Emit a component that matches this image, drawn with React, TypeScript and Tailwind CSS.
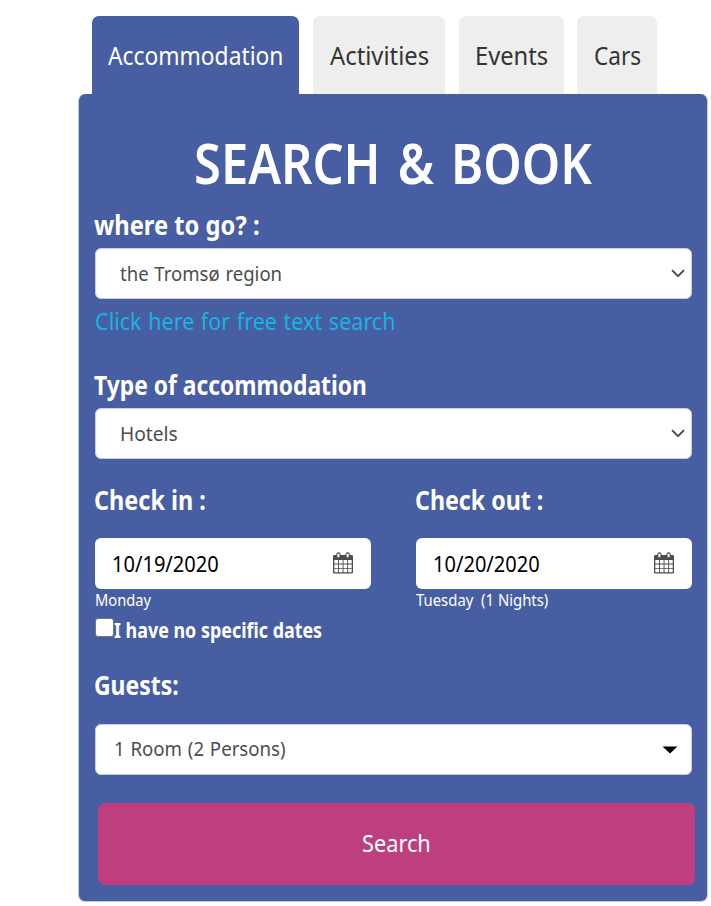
import { useLayoutEffect, useRef, useState } from "react";

type FitProps = { width: number; className?: string; children: string };

/** Single line of text condensed or widened horizontally to the given width. */
function Fit({ width, className = "", children }: FitProps) {
  const ref = useRef<HTMLSpanElement>(null);
  const [scale, setScale] = useState(1);
  useLayoutEffect(() => {
    if (ref.current) setScale(width / ref.current.offsetWidth);
  }, [width]);
  return (
    <span className={`block whitespace-pre ${className}`} style={{ width }}>
      <span ref={ref} className="inline-block origin-left" style={{ transform: `scaleX(${scale})` }}>
        {children}
      </span>
    </span>
  );
}

const label = "-ml-px h-9 text-[27px] leading-9 font-bold";
const field =
  "flex h-[51px] w-[597px] items-center rounded-md border border-[#c8cde0] bg-white text-[20.5px] text-[#4d4d4d]";

function Chevron() {
  return (
    <svg width="14" height="9" viewBox="0 0 14 9" className="mr-[6px]" fill="none" stroke="#4a4a4a" strokeWidth="1.9">
      <path d="M1 1.2 7 7.2 13 1.2" />
    </svg>
  );
}

function Calendar() {
  return (
    <svg width="20" height="22" viewBox="0 0 20 22" className="-mt-px" fill="none">
      <rect x="0" y="3" width="20" height="18.500" rx="1.200" fill="#4d4d4d" />
      <path
        d="M1.300 8h3.700v3.500H1.300zM5.900 8h3.700v3.500H5.900zM10.500 8h3.700v3.500h-3.700zM15.100 8h3.600v3.500h-3.600zM1.300 12.400h3.700v3.500H1.300zM5.900 12.400h3.700v3.500H5.900zM10.500 12.400h3.700v3.500h-3.700zM15.100 12.400h3.600v3.500h-3.600zM1.300 16.800h3.700v3.500H1.300zM5.900 16.800h3.700v3.500H5.900zM10.500 16.800h3.700v3.500h-3.700zM15.100 16.800h3.600v3.500h-3.600z"
        fill="#fff"
      />
      <rect x="3.800" y="0.900" width="3.200" height="5" rx="1.400" fill="#fff" stroke="#4d4d4d" strokeWidth="1.100" />
      <rect x="13" y="0.900" width="3.200" height="5" rx="1.400" fill="#fff" stroke="#4d4d4d" strokeWidth="1.100" />
    </svg>
  );
}

type DateFieldProps = { title: string; titleWidth: number; value: string; note: string; noteWidth: number };

function DateField({ title, titleWidth, value, note, noteWidth }: DateFieldProps) {
  return (
    <div className="w-[276px]">
      <Fit width={titleWidth} className={label}>{title}</Fit>
      <div className="mt-5 flex h-[51px] items-center justify-between rounded-md bg-white pr-[18px] pl-[17px]">
        <Fit width={107} className="text-[21px] leading-[48px] text-black">{value}</Fit>
        <Calendar />
      </div>
      <Fit width={noteWidth} className="h-6 text-[16px] leading-[23px]">{note}</Fit>
    </div>
  );
}

export default function App() {
  const tab = "flex h-[78px] justify-center rounded-t-[7px] bg-[#eeeeee] text-[25px] leading-[78px] text-[#333]";
  return (
    <main className="h-[906px] w-[711px] bg-white pt-4 pl-[78px] font-['Noto_Sans','Open_Sans',sans-serif]">
      <nav className="flex pl-[14px]">
        <div className="mr-[14px] flex h-[78px] w-[207px] justify-center rounded-t-[7px] bg-[#475ea2] text-[25px] leading-[78px] text-white">
          <Fit width={175}>Accommodation</Fit>
        </div>
        <div className={`${tab} mr-[14px] w-[132px]`}><Fit width={99}>Activities</Fit></div>
        <div className={`${tab} mr-[13px] w-[105px]`}><Fit width={73}>Events</Fit></div>
        <div className={`${tab} w-[80px]`}><Fit width={47}>Cars</Fit></div>
      </nav>

      <section className="h-[808px] w-[630px] rounded-[7px] border border-t-0 border-[#c5cce2] bg-[#475ea2] pl-4 text-white">
        <h1 className="flex h-[113px] pt-[36px] pl-[99px]">
          <Fit width={398} className="text-[56px] leading-[64px] font-semibold [word-spacing:5px]">SEARCH & BOOK</Fit>
        </h1>

        <Fit width={166} className={label}>where to go? :</Fit>
        <div className={`${field} mt-[5px] justify-between pl-6`}>
          <Fit width={162} className="leading-[47px] [word-spacing:1px]">the Tromsø region</Fit>
          <Chevron />
        </div>
        <Fit width={301} className="mt-[4px] h-9 text-[23px] leading-9 text-[#18b4e0] [word-spacing:1px]">Click here for free text search</Fit>

        <Fit width={273} className={`${label} mt-[28px]`}>Type of accommodation</Fit>
        <div className={`${field} mt-[5px] justify-between pl-6`}>
          <Fit width={58} className="leading-[47px]">Hotels</Fit>
          <Chevron />
        </div>

        <div className="mt-[23px] flex gap-[45px]">
          <DateField title="Check in :" titleWidth={112} value="10/19/2020" note="Monday" noteWidth={56} />
          <DateField title="Check out :" titleWidth={128} value="10/20/2020" note="Tuesday  (1 Nights)" noteWidth={132} />
        </div>

        <label className="flex h-[34px]">
          <span className="mt-[5px] block size-[19px] rounded-[3px] border border-[#767676] bg-white" />
          <Fit width={208} className="text-[21.5px] leading-[34px] font-bold">I have no specific dates</Fit>
        </label>

        <Fit width={85} className={`${label} mt-[20px]`}>Guests:</Fit>
        <div className={`${field} mt-[21px] justify-between pl-[18px]`}>
          <Fit width={172} className="-mt-[3px] leading-[47px] [word-spacing:1px]">1 Room (2 Persons)</Fit>
          <svg width="16" height="8" viewBox="0 0 16 8" className="mr-[13px]">
            <path d="M0.500 0.500h15L8 7.500z" fill="#000" />
          </svg>
        </div>

        <button className="mt-7 ml-[3px] flex h-[82px] w-[597px] justify-center rounded-[7px] bg-[#be3f80] text-[23px] leading-[81px]">
          <Fit width={69}>Search</Fit>
        </button>
      </section>
    </main>
  );
}
